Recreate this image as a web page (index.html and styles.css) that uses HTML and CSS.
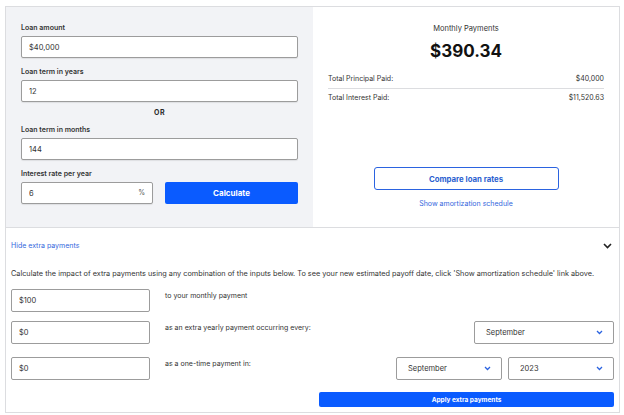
FILE: index.html
```html
<!DOCTYPE html>
<html>
<head>
<title>Loan Calculator</title>
<link rel="stylesheet" href="styles.css">
</head>
<body>
<div class="calc">
  <div class="top">
    <form class="inputs">
      <div class="form-group">
        <label for="amount">Loan amount</label>
        <input type="text" id="amount" value="$40,000">
      </div>
      <div class="form-group">
        <label for="years">Loan term in years</label>
        <input type="text" id="years" value="12">
      </div>
      <div class="or">OR</div>
      <div class="form-group">
        <label for="months">Loan term in months</label>
        <input type="text" id="months" value="144">
      </div>
      <label for="rate">Interest rate per year</label>
      <div class="rate-row">
        <div class="rate-field">
          <input type="text" id="rate" value="6">
          <span class="pct">%</span>
        </div>
        <button type="button" class="btn-primary">Calculate</button>
      </div>
    </form>

    <div class="results">
      <div class="monthly-label">Monthly Payments</div>
      <div class="monthly">$390.34</div>
      <div class="line principal">
        <span>Total Principal Paid:</span>
        <span>$40,000</span>
      </div>
      <div class="line">
        <span>Total Interest Paid:</span>
        <span>$11,520.63</span>
      </div>
      <button type="button" class="btn-outline">Compare loan rates</button>
      <a href="#" class="link center">Show amortization schedule</a>
    </div>
  </div>

  <div class="extra">
    <div class="extra-head">
      <a href="#" class="link">Hide extra payments</a>
      <svg class="toggle" width="9" height="6" viewBox="0 0 9 6"><path d="M1 1l3.5 3.5L8 1" fill="none" stroke="#222" stroke-width="1.6"/></svg>
    </div>
    <p class="desc">Calculate the impact of extra payments using any combination of the inputs below. To see your new estimated payoff date, click 'Show amortization schedule' link above.</p>

    <div class="extra-row">
      <input type="text" class="small" value="$100">
      <span class="row-text">to your monthly payment</span>
    </div>
    <div class="extra-row">
      <input type="text" class="small" value="$0">
      <span class="row-text">as an extra yearly payment occurring every:</span>
      <div class="select wide"><span>September</span><svg width="7" height="5" viewBox="0 0 7 5"><path d="M1 1l2.5 2.5L6 1" fill="none" stroke="#2b63e0" stroke-width="1.3"/></svg></div>
    </div>
    <div class="extra-row third">
      <input type="text" class="small" value="$0">
      <span class="row-text">as a one-time payment in:</span>
      <div class="select"><span>September</span><svg width="7" height="5" viewBox="0 0 7 5"><path d="M1 1l2.5 2.5L6 1" fill="none" stroke="#2b63e0" stroke-width="1.3"/></svg></div>
      <div class="select"><span>2023</span><svg width="7" height="5" viewBox="0 0 7 5"><path d="M1 1l2.5 2.5L6 1" fill="none" stroke="#2b63e0" stroke-width="1.3"/></svg></div>
    </div>
    <div class="apply-row">
      <button type="button" class="btn-apply">Apply extra payments</button>
    </div>
  </div>
</div>
</body>
</html>
```

FILE: styles.css
```css
body {
  font-family: Inter, "Liberation Sans", sans-serif;
  background-color: #fff;
  color: #2b2b2b;
  margin: 0;
  padding: 0;
}

.calc {
  width: 613px;
  height: 405px;
  margin: 6px 0 0 5px;
  border: 1px solid #dcdde0;
}

.top {
  display: grid;
  grid-template-columns: 307px 1fr;
  height: 220px;
  border-bottom: 1px solid #dcdde0;
}

.inputs {
  background-color: #f2f3f6;
  padding: 16px 15px 0 15px;
  margin: 0;
}

label {
  display: block;
  font-size: 7px;
  line-height: 10px;
  font-weight: 600;
  color: #333;
  margin-bottom: 3px;
}

input[type="text"] {
  display: block;
  width: 100%;
  height: 22px;
  padding: 0 7px;
  border: 1px solid #9c9c9c;
  border-radius: 2px;
  box-sizing: border-box;
  background: #fff;
  font-family: inherit;
  font-size: 7.5px;
  color: #333;
  box-shadow: 0 1px 1px rgba(0, 0, 0, 0.08);
}

.form-group {
  margin-bottom: 9px;
}

.or {
  text-align: center;
  font-size: 7px;
  font-weight: 700;
  line-height: 10px;
  letter-spacing: 0.5px;
  margin: -3px 0 7px;
}

.rate-row {
  display: flex;
  gap: 12px;
}

.rate-field {
  position: relative;
  width: 132px;
}

.pct {
  position: absolute;
  right: 8px;
  top: 6px;
  font-size: 7px;
  color: #555;
}

.btn-primary {
  flex: 1;
  height: 22px;
  background-color: #0a5bff;
  color: #fff;
  border: none;
  border-radius: 2px;
  font-family: inherit;
  font-size: 8px;
  font-weight: 700;
}

.results {
  padding: 16px 15px 0 15px;
  display: flex;
  flex-direction: column;
}

.monthly-label {
  text-align: center;
  font-size: 7.5px;
  line-height: 10px;
  color: #333;
  margin-top: 1px;
}

.monthly {
  text-align: center;
  font-size: 17px;
  font-weight: 700;
  line-height: 22px;
  margin-top: 6px;
  color: #111;
}

.line {
  display: flex;
  justify-content: space-between;
  font-size: 7px;
  line-height: 10px;
  color: #333;
  padding: 4px 0;
}

.line.principal {
  margin-top: 8px;
  border-bottom: 1px solid #dcdde0;
}

.btn-outline {
  align-self: center;
  width: 185px;
  height: 23px;
  margin-top: 60px;
  background: #fff;
  border: 1px solid #2b63e0;
  border-radius: 3px;
  color: #2b5fd0;
  font-family: inherit;
  font-size: 7.8px;
  font-weight: 700;
}

.link {
  color: #3467dd;
  font-size: 7px;
  line-height: 10px;
  text-decoration: none;
}

.center {
  text-align: center;
  margin-top: 9px;
}

.extra {
  padding: 0 5px;
}

.extra-head {
  display: flex;
  justify-content: space-between;
  align-items: center;
  padding-top: 13px;
  padding-right: 2px;
}

.desc {
  font-size: 7.3px;
  line-height: 10px;
  color: #333;
  margin: 18px 0 10px;
}

.extra-row {
  display: flex;
  align-items: flex-start;
  margin-bottom: 9px;
}

.extra-row input.small {
  width: 139px;
  height: 23px;
  flex: none;
  box-shadow: none;
}

.extra-row.third {
  margin-top: 13px;
  margin-bottom: 12px;
}

.row-text {
  flex: 1;
  font-size: 7px;
  line-height: 10px;
  color: #333;
  margin-left: 15px;
  margin-top: 2px;
}

.select {
  display: flex;
  justify-content: space-between;
  align-items: center;
  width: 106px;
  height: 23px;
  padding: 0 10px 0 11px;
  border: 1px solid #9c9c9c;
  border-radius: 2px;
  box-sizing: border-box;
  font-size: 7.5px;
  color: #333;
  margin-left: 6px;
}

.select.wide {
  width: 140px;
}

.apply-row {
  display: flex;
  justify-content: flex-end;
}

.btn-apply {
  width: 295px;
  height: 15px;
  background-color: #0a5bff;
  color: #fff;
  border: none;
  border-radius: 2px;
  font-family: inherit;
  font-size: 6.5px;
  font-weight: 700;
  padding: 0;
}
```
